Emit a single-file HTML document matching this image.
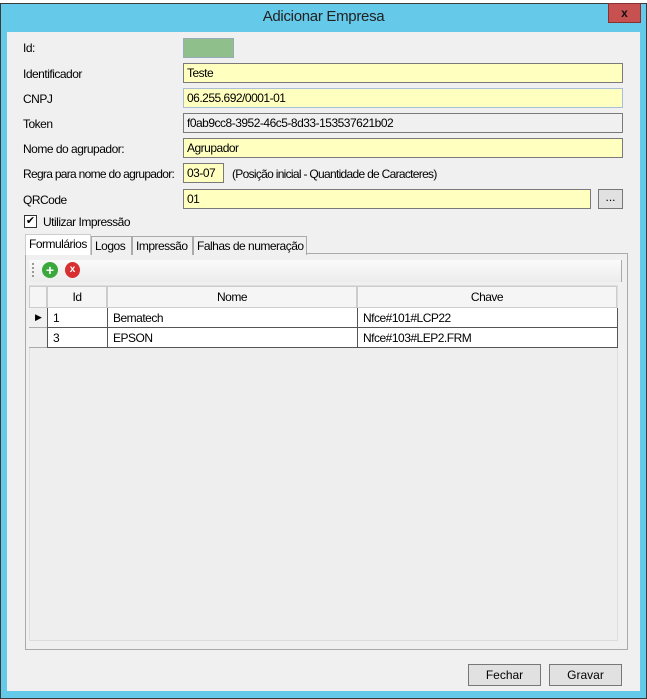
<!DOCTYPE html>
<html><head><style>
*{margin:0;padding:0;box-sizing:border-box}
body{width:647px;height:699px;background:#fff;font-family:"Liberation Sans",sans-serif;font-size:12px;color:#000;position:relative;overflow:hidden}
.a{position:absolute}
.win{left:0;top:3px;width:647px;height:696px;background:#65c9ea;border:1px solid #3a3a3a}
.client{left:7px;top:32px;width:633px;height:659px;background:#f0f0f0}
.lbl{position:absolute;font-size:12px;letter-spacing:-0.5px;white-space:nowrap}
.tb{position:absolute;height:20px;border:1px solid #7a7a7a;background:#ffffc0;padding:2px 3px;font-size:12px;letter-spacing:-0.5px;white-space:nowrap}
.btn{position:absolute;background:#e1e1e1;border:1px solid #777;text-align:center;font-size:12px;line-height:20px}
.tab{position:absolute;top:236px;height:19px;border:1px solid #aaa;border-bottom:none;background:#f0f0f0;font-size:12px;padding:2px 3px;letter-spacing:-0.5px;white-space:nowrap}
.c{position:absolute;border-right:1px solid #555;border-bottom:1px solid #555;padding:3px 5px;font-size:12px;background:#fff;height:20px;letter-spacing:-0.5px;white-space:nowrap}
.h{position:absolute;border:1px solid #ccc;background:#f5f5f5;text-align:center;font-size:12px;height:22px;line-height:20px;letter-spacing:-0.5px}
</style></head><body>
<div class="a win"></div>
<div class="a" style="left:0;top:8px;width:647px;text-align:center;font-size:15px;color:#222;letter-spacing:-0.3px">Adicionar Empresa</div>
<div class="a" style="left:608px;top:3px;width:33px;height:20px;background:#c75050;border:1px solid #8a3030;font-weight:bold;text-align:center;font-size:12px;line-height:18px;color:#111">x</div>
<div class="a client"></div>
<div class="lbl" style="left:23px;top:41px">Id:</div>
<div class="a" style="left:183px;top:38px;width:51px;height:20px;background:#8fbf8a;border:1px solid #9ab"></div>
<div class="lbl" style="left:23px;top:67px">Identificador</div>
<div class="tb" style="left:183px;top:63px;width:440px">Teste</div>
<div class="lbl" style="left:23px;top:92px">CNPJ</div>
<div class="tb" style="left:183px;top:88px;width:440px;border-color:#a9bfd6">06.255.692/0001-01</div>
<div class="lbl" style="left:23px;top:117px">Token</div>
<div class="tb" style="left:183px;top:113px;width:440px;background:#f0f0f0">f0ab9cc8-3952-46c5-8d33-153537621b02</div>
<div class="lbl" style="left:23px;top:142px">Nome do agrupador:</div>
<div class="tb" style="left:183px;top:138px;width:440px">Agrupador</div>
<div class="lbl" style="left:23px;top:167px;letter-spacing:-0.7px">Regra para nome do agrupador:</div>
<div class="tb" style="left:183px;top:163px;width:41px">03-07</div>
<div class="lbl" style="left:232px;top:167px;letter-spacing:-0.7px">(Posição inicial - Quantidade de Caracteres)</div>
<div class="lbl" style="left:23px;top:193px">QRCode</div>
<div class="tb" style="left:183px;top:189px;width:408px">01</div>
<div class="btn" style="left:598px;top:189px;width:25px;height:20px;line-height:14px">...</div>
<div class="a" style="left:24px;top:215px;width:13px;height:13px;border:1px solid #333;background:#fff;font-size:11px;line-height:11px;text-align:center">✔</div>
<div class="lbl" style="left:43px;top:215px">Utilizar Impressão</div>
<div class="a" style="left:25px;top:253px;width:603px;height:397px;border:1px solid #aaa;background:#f0f0f0"></div>
<div class="tab" style="left:25px;top:234px;height:21px;width:66px;background:#fff;z-index:2;border-color:#ccc">Formulários</div>
<div class="tab" style="left:91px;width:41px">Logos</div>
<div class="tab" style="left:132px;width:61px">Impressão</div>
<div class="tab" style="left:193px;width:114px">Falhas de numeração</div>
<div class="a" style="left:29px;top:260px;width:593px;height:22px;background:linear-gradient(#fafafa,#ececec);border-right:1px solid #aaa"></div>
<div class="a" style="left:32px;top:263px;width:2px;height:14px;border-left:2px dotted #999"></div>
<div class="a" style="left:42px;top:262px;width:16px;height:16px;border-radius:50%;background:#3aa83a;color:#fff;font-weight:bold;text-align:center;line-height:16px;font-size:14px">+</div>
<div class="a" style="left:65px;top:262px;width:15px;height:16px;border-radius:50%;background:#d83030;color:#fff;font-weight:bold;text-align:center;line-height:16px;font-size:10px">x</div>
<div class="a" style="left:29px;top:285px;width:589px;height:356px;background:#eee;border:1px solid #ddd"></div>
<div class="h" style="left:29px;top:286px;width:18px"></div>
<div class="h" style="left:47px;top:286px;width:60px">Id</div>
<div class="h" style="left:107px;top:286px;width:250px">Nome</div>
<div class="h" style="left:357px;top:286px;width:260px">Chave</div>
<div class="c" style="left:29px;top:308px;width:19px;background:#f0f0f0;border-color:#aaa;font-size:9px;padding:4px 6px">▶</div>
<div class="c" style="left:48px;top:308px;width:60px">1</div>
<div class="c" style="left:108px;top:308px;width:250px">Bematech</div>
<div class="c" style="left:358px;top:308px;width:260px">Nfce#101#LCP22</div>
<div class="c" style="left:29px;top:328px;width:19px;background:#f0f0f0;border-color:#aaa"></div>
<div class="c" style="left:48px;top:328px;width:60px">3</div>
<div class="c" style="left:108px;top:328px;width:250px">EPSON</div>
<div class="c" style="left:358px;top:328px;width:260px">Nfce#103#LEP2.FRM</div>
<div class="a" style="left:47px;top:308px;width:1px;height:40px;background:#555"></div>
<div class="btn" style="left:468px;top:664px;width:73px;height:22px">Fechar</div>
<div class="btn" style="left:549px;top:664px;width:73px;height:22px">Gravar</div>
</body></html>
